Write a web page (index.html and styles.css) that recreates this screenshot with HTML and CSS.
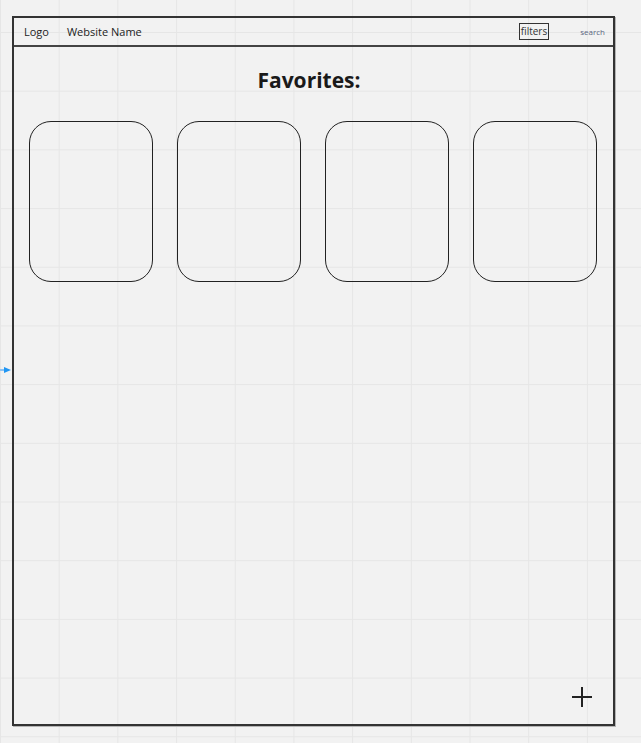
FILE: index.html
```html
<!DOCTYPE html>
<html>
<head>
    <title>Favorites</title>
    <meta name="viewport" content="width=device-width, initial-scale=1.0">
    <link rel="stylesheet" href="styles.css">
</head>
<body>
    <div class="canvas-arrow">
        <svg width="12" height="8" viewBox="0 0 12 8">
            <path d="M0 4 H6" stroke="#8cc4f4" stroke-width="2"/>
            <path d="M4 1 L11 4 L4 7 Z" fill="#2196f3"/>
        </svg>
    </div>
    <div class="frame">
        <div class="header">
            <span class="logo">Logo</span>
            <span class="site-name">Website Name</span>
            <span class="filters">filters</span>
            <span class="search">search</span>
        </div>
        <div class="content">
            <h1>Favorites:</h1>
            <div class="cards">
                <div class="card"></div>
                <div class="card"></div>
                <div class="card"></div>
                <div class="card"></div>
            </div>
        </div>
        <div class="add-btn">
            <svg width="20" height="20" viewBox="0 0 20 20">
                <path d="M10 0 V20 M0 10 H20" stroke="#222" stroke-width="2"/>
            </svg>
        </div>
    </div>
</body>
</html>
```

FILE: styles.css
```css
body {
    font-family: "Open Sans", Arial, sans-serif;
    margin: 0;
    height: 743px;
    overflow: hidden;
    position: relative;
    background-color: #f2f2f2;
    background-image:
        linear-gradient(to right, #e6e6e6 1px, transparent 1px),
        linear-gradient(to bottom, #e6e6e6 1px, transparent 1px);
    background-size: 58.7px 58.7px;
    background-position: 0 32px;
    color: #222;
}
.frame {
    position: relative;
    margin: 16px 0 0 12px;
    width: 599px;
    height: 706px;
    border: 2px solid #333;
    box-shadow: 1px 1px 0 #b5b5b5;
}
.header {
    display: flex;
    align-items: center;
    height: 27px;
    padding: 0 8px 0 10px;
    border-bottom: 2px solid #444;
    font-size: 11px;
}
.logo {
    margin-right: 18px;
}
.filters {
    margin-left: auto;
    margin-right: 31px;
    padding: 0 1px;
    height: 15px;
    line-height: 14px;
    font-size: 10px;
    color: #333;
    border: 1.5px solid #333;
}
.search {
    font-size: 8px;
    color: #5a6680;
}
.content {
    padding: 0 16px 0 15px;
}
h1 {
    margin: 19px 0 27px;
    padding-right: 8px;
    text-align: center;
    font-size: 21px;
    font-weight: 700;
    line-height: 28px;
    color: #1a1a1a;
}
.cards {
    display: flex;
    justify-content: space-between;
}
.card {
    width: 122px;
    height: 159px;
    border: 1px solid #222;
    border-radius: 22px;
}
.add-btn {
    position: absolute;
    right: 21px;
    bottom: 17px;
    width: 20px;
    height: 20px;
}
.add-btn svg {
    display: block;
}
.canvas-arrow {
    position: absolute;
    left: 0;
    top: 366px;
}
.canvas-arrow svg {
    display: block;
}
```
